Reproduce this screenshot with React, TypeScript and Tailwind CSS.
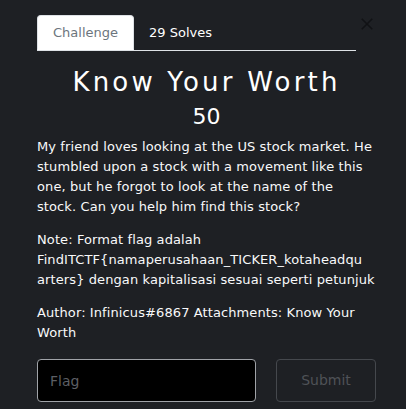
export default function App() {
  return (
    <div
      className="min-h-[409px] w-full bg-[#1e2024] text-white"
      style={{ fontFamily: '"DejaVu Sans", "Noto Sans", sans-serif' }}
    >
      <div className="ml-[37px] w-[339px] pt-[15px]">
        <div className="flex items-start">
          <nav className="flex w-[319px] border-b border-[#dee2e6]">
            <button className="-mb-px h-[35px] rounded-t-[4px] border border-[#dee2e6] border-b-white bg-white px-[15px] text-[13px] text-[#6c757d]">
              Challenge
            </button>
            <button className="h-[35px] px-[15px] text-[13px] text-white">29 Solves</button>
          </nav>
          <button className="ml-auto mt-[2px] mr-[2px] text-[#111215]">
            <svg width="14" height="14" viewBox="0 0 16 16" fill="none" stroke="currentColor" strokeWidth="1.8">
              <path d="M2 2L14 14M14 2L2 14" />
            </svg>
          </button>
        </div>

        <h1 className="mt-[14px] text-center text-[26px] leading-[34px] tracking-[3.2px]">Know Your Worth</h1>
        <h2 className="mt-[3px] text-center text-[22px] leading-[30px]">50</h2>

        <div className="mt-[5px] text-[13px] leading-[20px] tracking-[0.1px] text-[#f8f9fa]">
          <p>
            My friend loves looking at the US stock market. He
            <br />
            stumbled upon a stock with a movement like this
            <br />
            one, but he forgot to look at the name of the
            <br />
            stock. Can you help him find this stock?
          </p>
          <p className="mt-[13px]">
            Note: Format flag adalah
            <br />
            FindITCTF{'{'}namaperusahaan_TICKER_kotaheadqu
            <br />
            arters{'}'} dengan kapitalisasi sesuai seperti petunjuk
          </p>
          <p className="mt-[13px]">
            Author: Infinicus#6867 Attachments: Know Your
            <br />
            Worth
          </p>
        </div>

        <div className="mt-[16px] flex gap-[20px]">
          <input
            placeholder="Flag"
            className="h-[43px] w-[219px] rounded-[4px] border border-[#a0a3a8] bg-black px-[12px] text-[14px] text-white outline-none placeholder:text-[#5c5f64]"
          />
          <button className="h-[43px] flex-1 rounded-[4px] border border-[#45484d] text-[14px] text-[#4f5257]">
            Submit
          </button>
        </div>
      </div>
    </div>
  );
}
